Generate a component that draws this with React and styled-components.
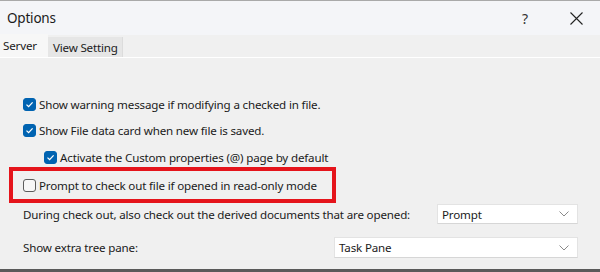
import React from "react";
import styled, { createGlobalStyle } from "styled-components";

const GlobalStyle = createGlobalStyle`
  html, body {
    margin: 0;
    padding: 0;
    overflow: hidden;
    background: #f0f0f0;
  }
  * {
    box-sizing: border-box;
  }
`;

const Window = styled.div`
  width: 600px;
  height: 272px;
  display: flex;
  flex-direction: column;
  background-color: #f0f0f0;
  border-top: 1px solid #a9a9a9;
  border-bottom: 3px solid #5a5a5a;
  font-family: "Noto Sans", "Open Sans", sans-serif;
  color: #1b1b1b;
  overflow: hidden;
`;

const TitleBar = styled.div`
  height: 34px;
  display: flex;
  align-items: center;
  padding-left: 7px;
  background-color: #f4f5f8;
  flex-shrink: 0;
`;

const Title = styled.div`
  font-size: 13.5px;
  letter-spacing: -0.2px;
  flex: 1;
`;

const HelpButton = styled.div`
  width: 20px;
  font-size: 14px;
  text-align: center;
  color: #333;
  margin-right: 34px;
`;

const CloseButton = styled.div`
  width: 14px;
  height: 14px;
  display: flex;
  align-items: center;
  justify-content: center;
  margin-right: 17px;
`;

const TabStrip = styled.div`
  height: 23px;
  display: flex;
  align-items: flex-end;
  background-color: #f0f0f0;
  border-bottom: 1px solid #ffffff;
  flex-shrink: 0;
`;

const Tab = styled.div`
  height: ${(p) => (p.active ? "23px" : "20px")};
  padding: ${(p) => (p.active ? "0 11px 0 3px" : "0 4px 0 5px")};
  display: flex;
  align-items: center;
  font-size: 11.6px;
  letter-spacing: -0.17px;
  background-color: ${(p) => (p.active ? "#f7f7f7" : "#e6e6e6")};
  border-right: ${(p) => (p.active ? "none" : "1px solid #dcdcdc")};
`;

const Panel = styled.div`
  flex: 1;
  display: flex;
  flex-direction: column;
  padding: 33px 22px 0 9px;
  font-size: 11.6px;
  letter-spacing: -0.17px;
`;

const Row = styled.div`
  height: ${(p) => p.h || 26}px;
  margin-top: ${(p) => p.mt || 0}px;
  padding-left: ${(p) => p.indent || 14}px;
  display: flex;
  align-items: center;
  gap: 3px;
  white-space: nowrap;
`;

const Highlight = styled.div`
  width: 327px;
  height: 36px;
  border: 4px solid #e5141b;
  display: flex;
  align-items: center;
  padding-left: 10px;
  gap: 3px;
  white-space: nowrap;
`;

const Box = styled.span`
  width: 13px;
  height: 13px;
  border-radius: 3px;
  flex-shrink: 0;
  display: inline-flex;
  align-items: center;
  justify-content: center;
  background-color: ${(p) => (p.checked ? "#0063b1" : "#f7f7f7")};
  border: 1px solid ${(p) => (p.checked ? "#0063b1" : "#5c5c5c")};
`;

const FieldRow = styled.div`
  height: ${(p) => p.h}px;
  margin-top: ${(p) => p.mt}px;
  padding-left: 14px;
  display: flex;
  align-items: center;
  justify-content: space-between;
  white-space: nowrap;
`;

const Select = styled.div`
  width: ${(p) => p.w}px;
  height: 100%;
  display: flex;
  align-items: center;
  justify-content: space-between;
  padding: 0 8px 0 4px;
  background-color: #ffffff;
  border: 1px solid #e3e3e3;
  border-bottom-color: #d6d6d6;
`;

const Checkbox = ({ checked }) => (
  <Box checked={checked}>
    {checked && (
      <svg width="9" height="9" viewBox="0 0 9 9">
        <path d="M1.5 4.6 L3.6 6.6 L7.6 2.4" fill="none" stroke="#fff" strokeWidth="1.3" />
      </svg>
    )}
  </Box>
);

const Chevron = () => (
  <svg width="10" height="6" viewBox="0 0 10 6">
    <path d="M0.5 0.5 L5 5 L9.5 0.5" fill="none" stroke="#8a8a8a" strokeWidth="1" />
  </svg>
);

export default function App() {
  return (
    <>
      <GlobalStyle />
      <Window>
        <TitleBar>
          <Title>Options</Title>
          <HelpButton>?</HelpButton>
          <CloseButton>
            <svg width="13" height="13" viewBox="0 0 13 13">
              <path d="M0.5 0.5 L12.5 12.5 M12.5 0.5 L0.5 12.5" stroke="#222" strokeWidth="1.1" />
            </svg>
          </CloseButton>
        </TitleBar>
        <TabStrip>
          <Tab active>Server</Tab>
          <Tab>View Setting</Tab>
        </TabStrip>
        <Panel>
          <Row>
            <Checkbox checked />
            Show warning message if modifying a checked in file.
          </Row>
          <Row>
            <Checkbox checked />
            Show File data card when new file is saved.
          </Row>
          <Row h={20} mt={4} indent={35}>
            <Checkbox checked />
            Activate the Custom properties (@) page by default
          </Row>
          <Highlight>
            <Checkbox />
            Prompt to check out file if opened in read-only mode
          </Highlight>
          <FieldRow h={20} mt={1}>
            During check out, also check out the derived documents that are opened:
            <Select w={141}>
              Prompt
              <Chevron />
            </Select>
          </FieldRow>
          <FieldRow h={21} mt={13}>
            Show extra tree pane:
            <Select w={244}>
              Task Pane
              <Chevron />
            </Select>
          </FieldRow>
        </Panel>
      </Window>
    </>
  );
}
